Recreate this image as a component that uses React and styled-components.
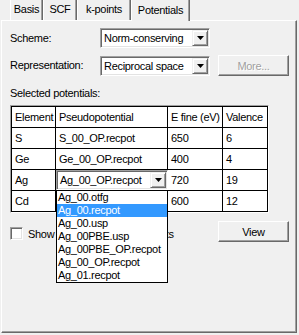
import React from "react";
import styled, { createGlobalStyle } from "styled-components";

const GlobalStyle = createGlobalStyle`
  html, body {
    margin: 0;
    padding: 0;
    background: #f0f0f0;
  }
  body {
    font-family: "Liberation Sans", Arial, sans-serif;
    font-size: 11px;
    letter-spacing: -0.3px;
    color: #000;
  }
`;

const Window = styled.div`
  width: 299px;
  height: 335px;
  display: flex;
  flex-direction: column;
  overflow: hidden;
`;

const TabStrip = styled.div`
  display: flex;
  height: 20px;
  padding-left: 10px;
  position: relative;
  z-index: 2;
`;

const Tab = styled.div`
  box-sizing: border-box;
  width: ${(p) => p.$w}px;
  height: ${(p) => (p.$active ? 21 : 20)}px;
  display: flex;
  align-items: center;
  justify-content: center;
  padding-bottom: 2px;
  background: #f0f0f0;
  border-left: 1px solid #fff;
  border-right: 1px solid #696969;
  box-shadow: inset -1px 0 0 #a0a0a0;
`;

const Panel = styled.div`
  flex: 1;
  margin: 0 2px 2px 1px;
  padding: 7px 0 0 8px;
  border-top: 1px solid #fff;
  border-left: 1px solid #fff;
  border-right: 1px solid #696969;
  border-bottom: 1px solid #696969;
  box-shadow: inset -1px -1px 0 #a0a0a0;
  display: flex;
  flex-direction: column;
`;

const Row = styled.div`
  display: flex;
  align-items: center;
  height: ${(p) => p.$h || 20}px;
  margin-top: ${(p) => p.$mt || 0}px;
`;

const Label = styled.div`
  width: 90px;
  line-height: 13px;
`;

const Combo = styled.div`
  box-sizing: border-box;
  width: ${(p) => p.$w}px;
  height: 20px;
  display: flex;
  background: #fff;
  border-style: solid;
  border-width: 1px;
  border-color: #a0a0a0 #fff #fff #a0a0a0;
  box-shadow: inset 1px 1px 0 #696969, inset -1px -1px 0 #e3e3e3;
  padding: 1px 1px 1px 1px;
`;

const ComboText = styled.div`
  flex: 1;
  padding-left: 2px;
  line-height: 16px;
  white-space: nowrap;
  overflow: hidden;
`;

const ArrowBtn = styled.div`
  box-sizing: border-box;
  width: 16px;
  height: 16px;
  background: #f0f0f0;
  border-style: solid;
  border-width: 1px;
  border-color: #f0f0f0 #696969 #696969 #f0f0f0;
  box-shadow: inset 1px 1px 0 #fff, inset -1px -1px 0 #a0a0a0;
  display: flex;
  align-items: center;
  justify-content: center;
`;

const Button = styled.div`
  box-sizing: border-box;
  width: 71px;
  height: 21px;
  margin-left: ${(p) => p.$ml || 0}px;
  background: #f0f0f0;
  border-style: solid;
  border-width: 1px;
  border-color: #fff #696969 #696969 #fff;
  box-shadow: inset -1px -1px 0 #a0a0a0;
  display: flex;
  align-items: center;
  justify-content: center;
  color: ${(p) => (p.$disabled ? "#a0a0a0" : "#000")};
  text-shadow: ${(p) => (p.$disabled ? "1px 1px 0 #fff" : "none")};
`;

const SectionLabel = styled.div`
  margin-top: 11px;
  line-height: 13px;
`;

const TableFrame = styled.div`
  margin-top: 5px;
  align-self: flex-start;
  border-style: solid;
  border-width: 1px;
  border-color: #a0a0a0 #fff #fff #a0a0a0;
`;

const Grid = styled.table`
  border-collapse: collapse;
  table-layout: fixed;
  width: 257px;
  background: #fff;

  td {
    border: 1px solid #000;
    height: 20px;
    padding: 0 0 0 3px;
    white-space: nowrap;
    line-height: 13px;
  }
`;

const ComboCell = styled.td`
  && {
    padding: 0;
  }
`;

const ComboWrap = styled.div`
  position: relative;
  z-index: 3;
`;

const DropList = styled.div`
  position: absolute;
  top: 100%;
  left: 0;
  width: 112px;
  box-sizing: border-box;
  background: #fff;
  border: 1px solid #000;
`;

const DropItem = styled.div`
  height: 13px;
  line-height: 13px;
  padding-left: 1px;
  white-space: nowrap;
  overflow: hidden;
  background: ${(p) => (p.$sel ? "#3399ff" : "#fff")};
  color: ${(p) => (p.$sel ? "#fff" : "#000")};
`;

const CheckRow = styled.div`
  display: grid;
  grid-template-columns: 208px 71px;
  margin-top: 8px;
  height: 21px;
`;

const CheckLabel = styled.label`
  display: flex;
  align-items: center;
  gap: 5px;
  margin-top: 6px;
  height: 13px;
  white-space: nowrap;
`;

const Box = styled.span`
  box-sizing: border-box;
  width: 13px;
  height: 13px;
  background: #fff;
  border-style: solid;
  border-width: 1px;
  border-color: #a0a0a0 #fff #fff #a0a0a0;
  box-shadow: inset 1px 1px 0 #696969, inset -1px -1px 0 #e3e3e3;
`;

const Arrow = () => (
  <svg width="7" height="4" viewBox="0 0 7 4">
    <polygon points="0,0 7,0 3.5,4" fill="#000" />
  </svg>
);

const tabs = [
  { name: "Basis", w: 33 },
  { name: "SCF", w: 34 },
  { name: "k-points", w: 54 },
  { name: "Potentials", w: 59, active: true },
];

const potentials = [
  { el: "S", pp: "S_00_OP.recpot", e: "650", v: "6" },
  { el: "Ge", pp: "Ge_00_OP.recpot", e: "400", v: "4" },
  { el: "Ag", pp: "Ag_00_OP.recpot", e: "720", v: "19", combo: true },
  { el: "Cd", pp: "", e: "600", v: "12" },
];

const options = [
  "Ag_00.otfg",
  "Ag_00.recpot",
  "Ag_00.usp",
  "Ag_00PBE.usp",
  "Ag_00PBE_OP.recpot",
  "Ag_00_OP.recpot",
  "Ag_01.recpot",
];

export default function App() {
  return (
    <Window>
      <GlobalStyle />
      <TabStrip>
        {tabs.map((t) => (
          <Tab key={t.name} $w={t.w} $active={t.active}>
            {t.name}
          </Tab>
        ))}
      </TabStrip>
      <Panel>
        <Row>
          <Label>Scheme:</Label>
          <Combo $w={110}>
            <ComboText>Norm-conserving</ComboText>
            <ArrowBtn><Arrow /></ArrowBtn>
          </Combo>
        </Row>
        <Row $h={21} $mt={7}>
          <Label>Representation:</Label>
          <Combo $w={110}>
            <ComboText>Reciprocal space</ComboText>
            <ArrowBtn><Arrow /></ArrowBtn>
          </Combo>
          <Button $ml={8} $disabled>More...</Button>
        </Row>
        <SectionLabel>Selected potentials:</SectionLabel>
        <TableFrame>
          <Grid>
            <colgroup>
              <col style={{ width: 44 }} />
              <col style={{ width: 112 }} />
              <col style={{ width: 55 }} />
              <col style={{ width: 45 }} />
            </colgroup>
            <tbody>
              <tr>
                <td>Element</td>
                <td>Pseudopotential</td>
                <td>E fine (eV)</td>
                <td>Valence</td>
              </tr>
              {potentials.map((p) => (
                <tr key={p.el}>
                  <td>{p.el}</td>
                  {p.combo ? (
                    <ComboCell>
                      <ComboWrap>
                        <Combo $w={112}>
                          <ComboText>{p.pp}</ComboText>
                          <ArrowBtn><Arrow /></ArrowBtn>
                        </Combo>
                        <DropList>
                          {options.map((o) => (
                            <DropItem key={o} $sel={o === "Ag_00.recpot"}>
                              {o}
                            </DropItem>
                          ))}
                        </DropList>
                      </ComboWrap>
                    </ComboCell>
                  ) : (
                    <td>{p.pp}</td>
                  )}
                  <td>{p.e}</td>
                  <td>{p.v}</td>
                </tr>
              ))}
            </tbody>
          </Grid>
        </TableFrame>
        <CheckRow>
          <CheckLabel>
            <Box />
            Show potentials for all elements
          </CheckLabel>
          <Button>View</Button>
        </CheckRow>
      </Panel>
    </Window>
  );
}
